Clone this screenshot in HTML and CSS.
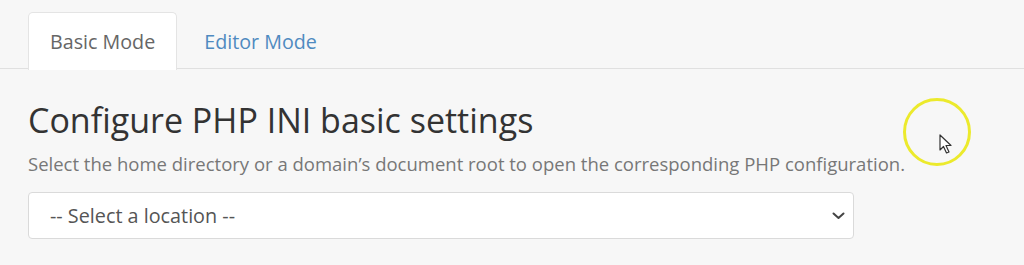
FILE: index.html
```html
<!DOCTYPE html>
<html>
<head>
<meta charset="utf-8">
<link rel="stylesheet" href="styles.css">
</head>
<body>
<div class="page">
  <nav class="tabs">
    <div class="tab active">Basic Mode</div>
    <div class="tab">Editor Mode</div>
  </nav>
  <section class="content">
    <h1 class="title">Configure PHP INI basic settings</h1>
    <p class="desc">Select the home directory or a domain’s document root to open the corresponding PHP configuration.</p>
    <div class="select">
      <span class="select-text">-- Select a location --</span>
      <svg class="chev" width="13" height="8" viewBox="0 0 13 8"><path d="M1.5 1.5 L6.5 6 L11.5 1.5" fill="none" stroke="#444" stroke-width="2" stroke-linecap="round" stroke-linejoin="round"/></svg>
    </div>
  </section>
</div>
<div class="cursor-ring">
  <svg class="cursor" width="14" height="20" viewBox="0 0 14 20"><path d="M1 1 L1 16 L4.5 12.5 L7.5 19 L10 18 L7 11.5 L12 11.5 Z" fill="#fff" stroke="#333" stroke-width="1.2" stroke-linejoin="round"/></svg>
</div>
</body>
</html>
```
FILE: styles.css
```css
html, body {
  margin: 0;
  padding: 0;
  background: #f7f7f7;
  font-family: "Open Sans", "Liberation Sans", sans-serif;
}
.page {
  width: 1024px;
  height: 265px;
  overflow: hidden;
}
.tabs {
  display: flex;
  padding: 12px 0 0 28px;
  border-bottom: 1px solid #e0e0e0;
  height: 56px;
  box-sizing: content-box;
}
.tab {
  padding: 0 21px 0 21px;
  font-size: 19.7px;
  line-height: 58px;
  color: #4f8ac0;
  border: 1px solid transparent;
  border-bottom: none;
  margin-bottom: -1px;
}
.tab.active {
  background: #fff;
  color: #666;
  border-color: #e4e4e4;
  border-radius: 5px 5px 0 0;
  height: 57px;
  margin-right: 5px;
}
.content {
  padding: 0 28px;
}
.title {
  margin: 28px 0 0 0;
  font-weight: 400;
  font-size: 34px;
  line-height: 46px;
  color: #333;
}
.desc {
  margin: 8px 0 0 0;
  font-size: 18.5px;
  line-height: 26px;
  color: #777;
}
.select {
  margin-top: 15px;
  width: 826px;
  height: 47px;
  box-sizing: border-box;
  background: #fff;
  border: 1px solid #dadada;
  border-radius: 4px;
  display: flex;
  align-items: center;
  justify-content: space-between;
  padding: 0 8px 0 21px;
}
.select-text {
  font-size: 19.8px;
  color: #555;
}
.chev {
  margin-right: 0;
}
.cursor-ring {
  position: absolute;
  left: 903px;
  top: 98px;
  width: 62px;
  height: 62px;
  border: 3px solid #ecea2c;
  border-radius: 50%;
}
.cursor {
  position: absolute;
  left: 33px;
  top: 33px;
}
```
